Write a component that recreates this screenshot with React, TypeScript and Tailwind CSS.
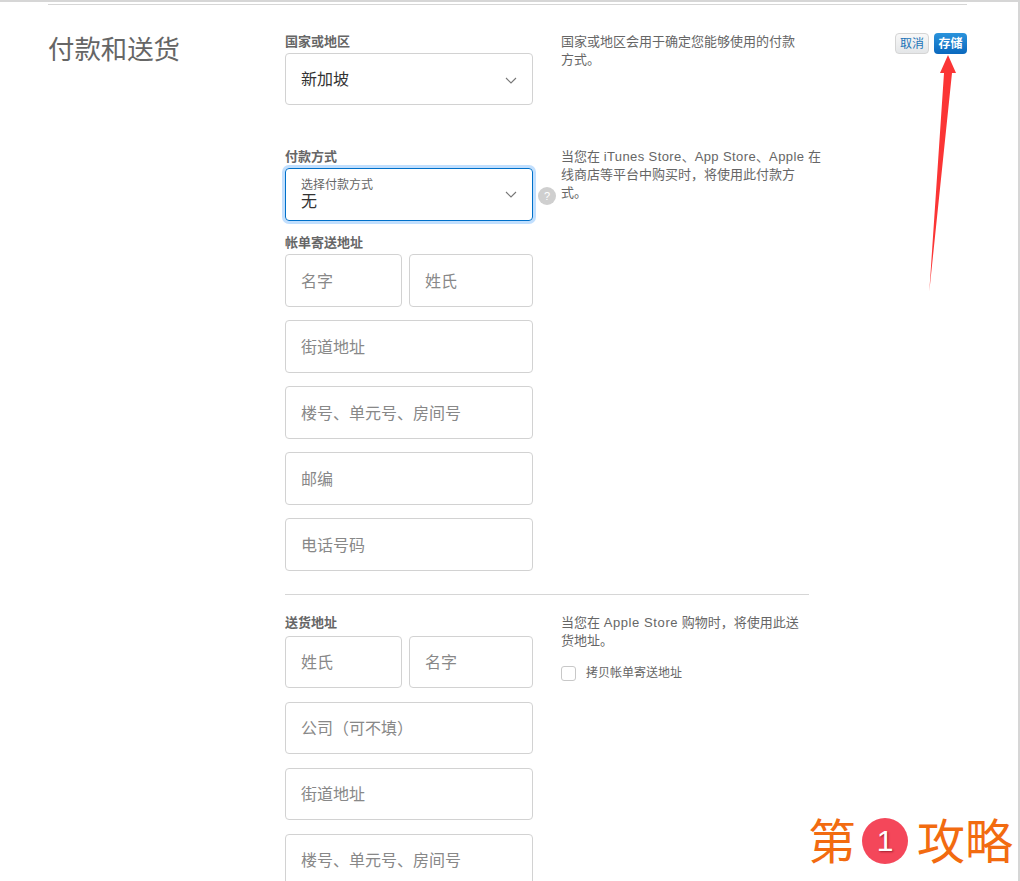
const cjk = "font-['Liberation_Sans','Noto_Sans_CJK_SC',sans-serif]";

function Field({ text, className = "" }: { text: string; className?: string }) {
  return (
    <div className={`flex h-[53px] items-center rounded-[4px] border border-[#d2d2d2] bg-white pt-[2px] pl-[15px] text-[16px] text-[#888] ${className}`}>
      {text}
    </div>
  );
}

function Chevron() {
  return (
    <svg width="12" height="7" viewBox="0 0 12 7" fill="none" className="ml-auto mr-[15px] shrink-0">
      <path d="M1 1l5 5 5-5" stroke="#777" strokeWidth="1.1" />
    </svg>
  );
}

function Label({ text }: { text: string }) {
  return <div className="h-[18px] pt-[1px] text-[13px] leading-[18px] font-bold text-[#666]">{text}</div>;
}

function Latin({ text, className = "tracking-[0.6px]" }: { text: string; className?: string }) {
  return <span className={className}>{text}</span>;
}

export default function App() {
  return (
    <div className={`relative h-[881px] overflow-hidden border-t-2 border-r-2 border-[#d6d6d6] bg-white ${cjk}`}>
      <div className="mx-[48px] mr-[51px] mt-[2px] border-t border-[#d6d6d6] pt-[27px]">
        <div className="flex">
          {/* left title */}
          <div className="w-[237px] shrink-0 pt-[1px] text-[26.4px] leading-[34px] text-[#666]">付款和送货</div>

          <div className="w-[524px] shrink-0">
            {/* country */}
            <div className="flex gap-[28px]">
              <div className="w-[248px] shrink-0">
                <Label text="国家或地区" />
                <div className="mt-[3px] flex h-[52px] items-center rounded-[4px] border border-[#d2d2d2] pt-[2px] pl-[15px] text-[16px] text-[#333]">
                  新加坡
                  <Chevron />
                </div>
              </div>
              <p className="pt-[1px] text-[13px] leading-[18px] whitespace-nowrap text-[#666]">
                国家或地区会用于确定您能够使用的付款
                <br />
                方式。
              </p>
            </div>

            {/* payment */}
            <div className="mt-[42px] flex gap-[28px]">
              <div className="w-[248px] shrink-0">
                <Label text="付款方式" />
                <div className="relative mt-[3px] flex h-[53px] items-center rounded-[4px] border border-[#0070c9] pl-[15px] shadow-[0_0_0_3px_rgba(131,192,253,0.5)]">
                  <div>
                    <div className="text-[12px] leading-[14px] text-[#666]">选择付款方式</div>
                    <div className="text-[16px] leading-[20px] text-[#333]">无</div>
                  </div>
                  <Chevron />
                  <div className="absolute left-[252px] top-[18px] flex h-[18px] w-[18px] items-center justify-center rounded-full bg-[#cfcfcf] text-[11px] text-white">?</div>
                </div>
                <div className="mt-[12px]">
                  <Label text="帐单寄送地址" />
                </div>
                <div className="mt-[3px] flex flex-col gap-[13px]">
                  <div className="flex gap-[7px]">
                    <Field text="名字" className="w-[117px]" />
                    <Field text="姓氏" className="w-[124px]" />
                  </div>
                  <Field text="街道地址" />
                  <Field text="楼号、单元号、房间号" />
                  <Field text="邮编" />
                  <Field text="电话号码" />
                </div>
              </div>
              <p className="pt-[1px] text-[13px] leading-[18px] whitespace-nowrap text-[#666]">
                当您在 <Latin text="iTunes Store" className="tracking-[0.4px]" />、<Latin text="App Store" className="tracking-[0.4px]" />、<Latin text="Apple" className="tracking-[0.4px]" /> 在
                <br />
                线商店等平台中购买时，将使用此付款方
                <br />
                式。
              </p>
            </div>

            <div className="mt-[23px] border-t border-[#d6d6d6]" />

            {/* shipping */}
            <div className="mt-[18px] flex gap-[28px]">
              <div className="w-[248px] shrink-0">
                <Label text="送货地址" />
                <div className="mt-[5px] flex flex-col gap-[14px]">
                  <div className="flex gap-[7px]">
                    <Field text="姓氏" className="!h-[52px] w-[117px]" />
                    <Field text="名字" className="!h-[52px] w-[124px]" />
                  </div>
                  <Field text="公司（可不填）" className="!h-[52px]" />
                  <Field text="街道地址" className="!h-[52px]" />
                  <Field text="楼号、单元号、房间号" className="!h-[52px]" />
                </div>
              </div>
              <div className="w-[248px] pt-[1px]">
                <p className="text-[13px] leading-[18px] whitespace-nowrap text-[#666]">
                  当您在 <Latin text="Apple Store" /> 购物时，将使用此送
                  <br />
                  货地址。
                </p>
                <label className="mt-[14px] flex items-center gap-[10px] text-[12px] text-[#666]">
                  <span className="h-[15px] w-[15px] rounded-[3px] border border-[#c8c8c8]" />
                  拷贝帐单寄送地址
                </label>
              </div>
            </div>
          </div>

          {/* actions */}
          <div className="ml-auto flex gap-[5px] pt-[1px]">
            <button className="flex h-[21px] w-[34px] items-center justify-center rounded-[4px] border border-[#d5d5d5] bg-gradient-to-b from-[#f8f8f8] to-[#e4e6e8] pt-[1px] text-[12px] text-[#1a73b8]">取消</button>
            <button className="flex h-[21px] w-[33px] items-center justify-center rounded-[4px] bg-gradient-to-b from-[#2a93dc] to-[#0a68bd] pt-[1px] text-[12px] font-bold text-white">存储</button>
          </div>
        </div>
      </div>

      {/* red annotation arrow */}
      <svg width="40" height="240" viewBox="0 0 40 240" className="absolute left-[920px] top-[52px]">
        <path d="M28 1L36 19L32 19L9.3 237.5L24 19L20 19Z" fill="#fb3535" />
      </svg>

      {/* watermark */}
      <div className="absolute left-[808px] top-[812px] flex items-center text-[48px] leading-[58px] text-[#f26b10]">
        <span>第</span>
        <span className="-mt-[4px] mr-[9px] ml-[6px] flex h-[46px] w-[46px] items-center justify-center rounded-full bg-[#f4475a] text-[30px] text-white [text-shadow:1px_1px_2px_#a02030]">1</span>
        <span>攻略</span>
      </div>
    </div>
  );
}
